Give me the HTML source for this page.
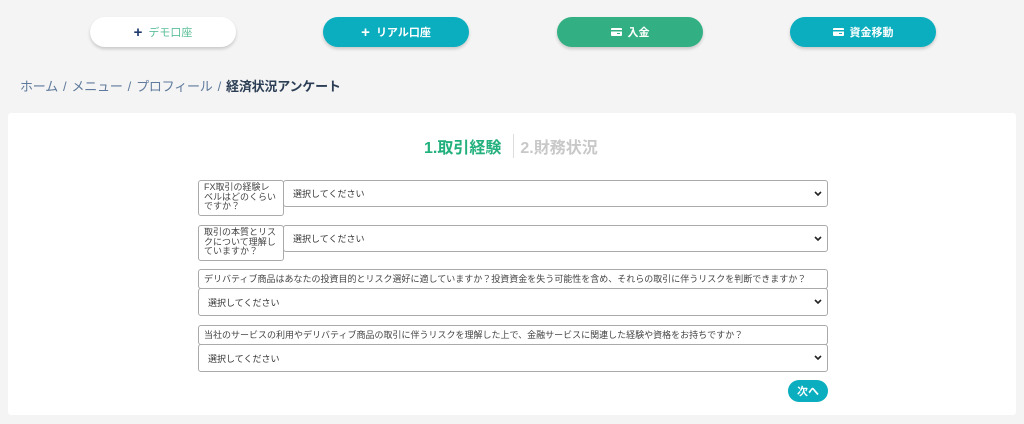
<!DOCTYPE html>
<html><head><meta charset="utf-8"><style>
*{box-sizing:border-box;margin:0;padding:0}
body{width:1024px;height:424px;background:#f4f4f4;font-family:"Liberation Sans","Noto Sans CJK JP",sans-serif;position:relative;overflow:hidden}
.btn{position:absolute;top:17px;width:146px;height:30px;border-radius:15px;color:#fff;font-size:11px;font-weight:bold;display:flex;align-items:center;justify-content:center;gap:6px;box-shadow:0 2px 3px rgba(0,0,0,.18)}
.bc{position:absolute;left:20px;top:76px;font-size:13px;color:#5f7a9c;letter-spacing:-0.2px}
.bc i{font-style:normal;margin:0 5px}
.bc b{color:#2c3e55}
.card{position:absolute;left:8px;top:113px;width:1008px;height:302px;background:#fff;border-radius:3px}
.steps{position:absolute;top:134px;left:424px;font-size:16px;font-weight:bold;display:flex;align-items:center}
.lab{position:absolute;border:1px solid #aaa;border-radius:3px;font-size:9px;color:#444;line-height:9.5px;padding:2px 5px;background:#fff}
.sel{position:absolute;border:1px solid #aaa;border-radius:3px;font-size:9px;color:#333;display:flex;align-items:center;padding-left:9px;background:#fff}
.sel svg{position:absolute;right:5px;top:50%;margin-top:-3px}
</style></head><body>
<div class="btn" style="left:90px;background:#fff;color:#5cbf98;font-weight:normal"><span style="color:#1f3a6e;font-size:15px;font-weight:bold">+</span>デモ口座</div>
<div class="btn" style="left:323px;background:#0aaebf"><span style="font-size:15px">+</span>リアル口座</div>
<div class="btn" style="left:557px;background:#33b083"><svg width="11" height="8"><rect width="11" height="8" rx="1" fill="#fff"/><rect y="2" width="11" height="1.5" fill="#33b083"/><rect x="6" y="5" width="3" height="1" fill="#33b083"/></svg>入金</div>
<div class="btn" style="left:790px;background:#0aaebf"><svg width="11" height="8"><rect width="11" height="8" rx="1" fill="#fff"/><rect y="2" width="11" height="1.5" fill="#0aaebf"/><rect x="6" y="5" width="3" height="1" fill="#0aaebf"/></svg>資金移動</div>
<div class="bc">ホーム<i>/</i>メニュー<i>/</i>プロフィール<i>/</i><b>経済状況アンケート</b></div>
<div class="card"></div>
<div class="steps"><span style="color:#22b07d">1.取引経験</span><span style="display:inline-block;width:1px;height:24px;background:#ddd;margin:0 6px 0 12px"></span><span style="color:#c8c8c8">2.財務状況</span></div>
<div class="lab" style="left:198px;top:180px;width:86px;height:36px">FX取引の経験レベルはどのくらいですか？</div>
<div class="sel" style="left:283px;top:180px;width:545px;height:27px">選択してください<svg width="8" height="6"><path d="M1 1l3 3 3-3" stroke="#222" stroke-width="1.6" fill="none"/></svg></div>
<div class="lab" style="left:198px;top:225px;width:86px;height:36px">取引の本質とリスクについて理解していますか？</div>
<div class="sel" style="left:283px;top:225px;width:545px;height:27px">選択してください<svg width="8" height="6"><path d="M1 1l3 3 3-3" stroke="#222" stroke-width="1.6" fill="none"/></svg></div>
<div class="lab" style="left:198px;top:269px;width:630px;height:20px;font-size:9px;line-height:14px">デリバティブ商品はあなたの投資目的とリスク選好に適していますか？投資資金を失う可能性を含め、それらの取引に伴うリスクを判断できますか？</div>
<div class="sel" style="left:198px;top:288px;width:630px;height:28px">選択してください<svg width="8" height="6"><path d="M1 1l3 3 3-3" stroke="#222" stroke-width="1.6" fill="none"/></svg></div>
<div class="lab" style="left:198px;top:325px;width:630px;height:20px;font-size:9px;line-height:14px">当社のサービスの利用やデリバティブ商品の取引に伴うリスクを理解した上で、金融サービスに関連した経験や資格をお持ちですか？</div>
<div class="sel" style="left:198px;top:344px;width:630px;height:28px">選択してください<svg width="8" height="6"><path d="M1 1l3 3 3-3" stroke="#222" stroke-width="1.6" fill="none"/></svg></div>
<div style="position:absolute;left:788px;top:380px;width:40px;height:22px;border-radius:11px;background:#0aaebf;color:#fff;font-size:11px;font-weight:bold;display:flex;align-items:center;justify-content:center">次へ</div>
</body></html>
